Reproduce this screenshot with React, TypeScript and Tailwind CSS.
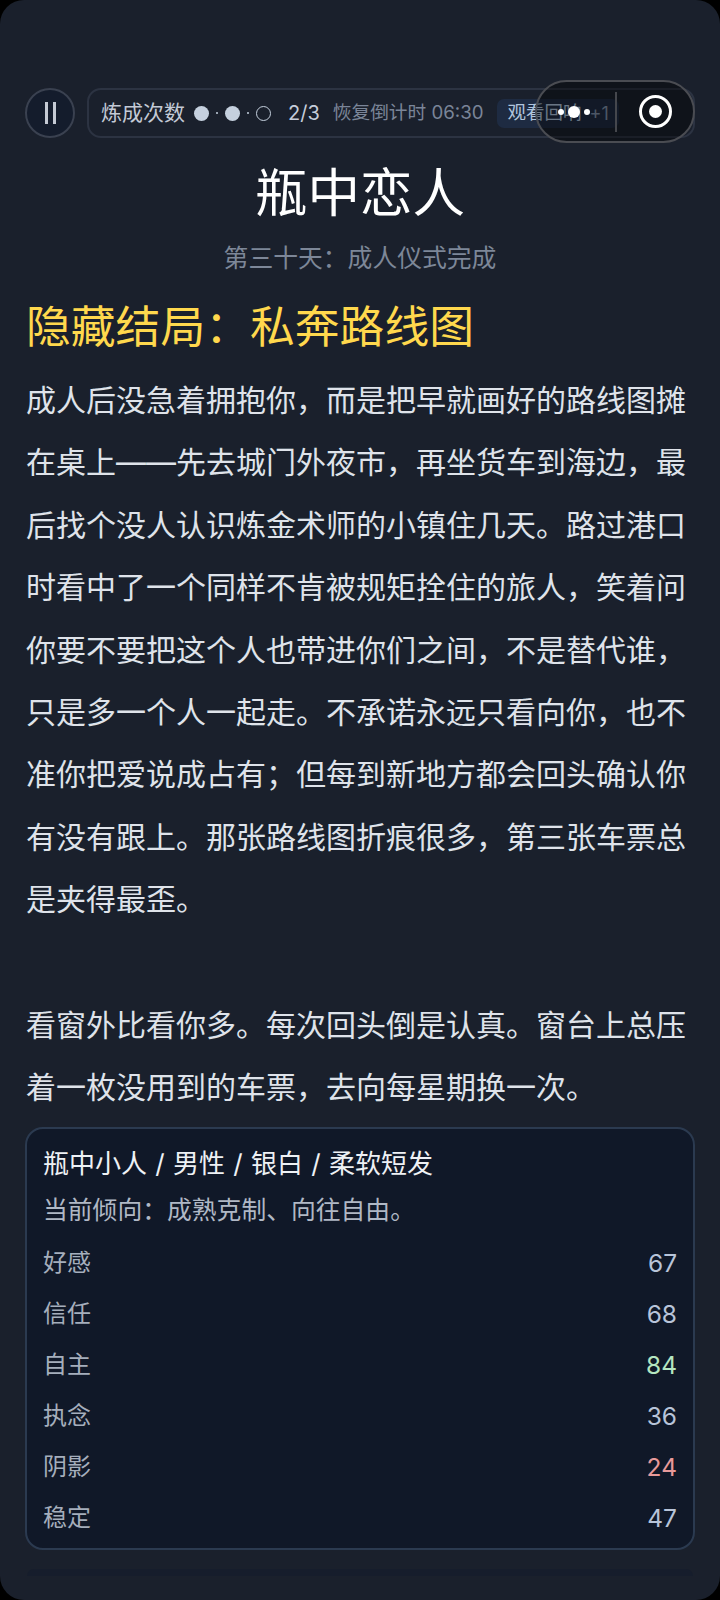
const FONT = "font-['Inter','Noto_Sans_CJK_SC',sans-serif]";

const STATS = [
  { label: '好感', value: 67, color: 'text-[#b8c4d9]' },
  { label: '信任', value: 68, color: 'text-[#b8c4d9]' },
  { label: '自主', value: 84, color: 'text-[#b5e6c0]' },
  { label: '执念', value: 36, color: 'text-[#b8c4d9]' },
  { label: '阴影', value: 24, color: 'text-[#e89a9a]' },
  { label: '稳定', value: 47, color: 'text-[#b8c4d9]' },
];

const STORY =
  '成人后没急着拥抱你\uFF0C而是把早就画好的路线图摊在桌上——先去城门外夜市\uFF0C再坐货车到海边\uFF0C最后找个没人认识炼金术师的小镇住几天。路过港口时看中了一个同样不肯被规矩拴住的旅人\uFF0C笑着问你要不要把这个人也带进你们之间\uFF0C不是替代谁\uFF0C只是多一个人一起走。不承诺永远只看向你\uFF0C也不准你把爱说成占有\uFF1B但每到新地方都会回头确认你有没有跟上。那张路线图折痕很多\uFF0C第三张车票总是夹得最歪。';
const NOTE = '看窗外比看你多。每次回头倒是认真。窗台上总压着一枚没用到的车票\uFF0C去向每星期换一次。';

const StatusBar = () => (
  <div className="flex items-center gap-[12px] px-[25px]">
    <div className="flex h-[50px] w-[50px] shrink-0 items-center justify-center gap-[5px] rounded-full border-2 border-[#3a4150] bg-[#141c2c]">
      <span className="h-[22px] w-[3px] bg-[#c5cad4]" />
      <span className="h-[22px] w-[3px] bg-[#c5cad4]" />
    </div>
    <div className="flex h-[50px] flex-1 items-center overflow-hidden rounded-[14px] border-2 border-[#2c3342] pl-[12px]">
      <span className="text-[21px] text-[#c3cad6]">炼成次数</span>
      <span className="ml-[9px] h-[15px] w-[15px] rounded-full bg-[#c5d0de]" />
      <span className="mx-[7px] h-[2px] w-[2px] rounded-full bg-[#c5d0de]" />
      <span className="h-[15px] w-[15px] rounded-full bg-[#c5d0de]" />
      <span className="mx-[7px] h-[2px] w-[2px] rounded-full bg-[#c5d0de]" />
      <span className="h-[15px] w-[15px] rounded-full border border-[#c5d0de]" />
      <span className="ml-[17px] text-[20px] text-[#c5cdda]">2/3</span>
      <span className="ml-[13px] shrink-0 text-[18.7px] text-[#7a8598]">恢复倒计时 06:30</span>
      <span className="ml-[13px] flex h-[29px] shrink-0 items-center gap-[8px] rounded-[7px] bg-[#1e2b42] pl-[11px] pr-[10px] text-[#b0c4dc]">
        <span className="text-[18.5px]">观看回响</span>
        <span className="text-[18px] text-[#7f90a8]">+1</span>
      </span>
    </div>
  </div>
);

// WeChat mini program capsule, sits over the status bar
const Capsule = () => (
  <div className="absolute left-[535px] top-[80px] flex h-[63px] w-[160px] items-center rounded-full border-2 border-[#4a4c52] bg-black/40">
    <div className="flex w-[78px] items-center justify-center gap-[4px] pr-[4px]">
      <span className="h-[6px] w-[6px] rounded-full bg-white" />
      <span className="h-[12px] w-[12px] rounded-full bg-white" />
      <span className="h-[6px] w-[6px] rounded-full bg-white" />
    </div>
    <span className="h-[40px] w-[2px] bg-[#45474d]" />
    <div className="flex flex-1 items-center justify-center">
      <div className="flex h-[33px] w-[33px] items-center justify-center rounded-full border-[3px] border-white">
        <span className="h-[13px] w-[13px] rounded-full bg-white" />
      </div>
    </div>
  </div>
);

export default function App() {
  return (
    <div className={`relative h-[1600px] w-[720px] overflow-hidden bg-black ${FONT}`}>
      <div className="h-full overflow-hidden rounded-[24px] bg-[#1a202c] pt-[88px]">
        <StatusBar />
        <h1 className="mt-[15px] text-center text-[52.5px] leading-[80px] text-white">瓶中恋人</h1>
        <p className="mt-[7px] text-center text-[24.8px] leading-[36px] text-[#7d8798]">{'第三十天\uFF1A成人仪式完成'}</p>
        <div className="px-[26px]">
          <h2 className="mt-[18px] text-[44.8px] leading-[66px] text-[#ffd84d]">{'隐藏结局\uFF1A私奔路线图'}</h2>
          <div className="mt-[9px] text-[30px] leading-[62.4px] text-[#dfe3ea]">
            <p>{STORY}</p>
            <p className="mt-[63px]">{NOTE}</p>
          </div>
        </div>
        <div className="mx-[25px] mt-[9px] rounded-[18px] border-2 border-[#2b3a50] bg-[#101828] px-[16px] pb-[5px] pt-[17px]">
          <div className="text-[26px] leading-[36px] text-[#eef1f5] [word-spacing:1px]">瓶中小人 / 男性 / 银白 / 柔软短发</div>
          <div className="mt-[11px] text-[24.8px] leading-[34px] text-[#b0b8c5]">{'当前倾向\uFF1A成熟克制、向往自由。'}</div>
          <div className="mt-[10px]">
            {STATS.map((s) => (
              <div key={s.label} className="flex h-[51px] items-center justify-between">
                <span className="text-[24px] text-[#a5aebc]">{s.label}</span>
                <span className={`text-[24.5px] ${s.color}`}>{s.value}</span>
              </div>
            ))}
          </div>
        </div>
        <div className="mx-[27px] mt-[19px] h-[7px] rounded-t-[8px] bg-[#161d2c]" />
      </div>
      <Capsule />
    </div>
  );
}
